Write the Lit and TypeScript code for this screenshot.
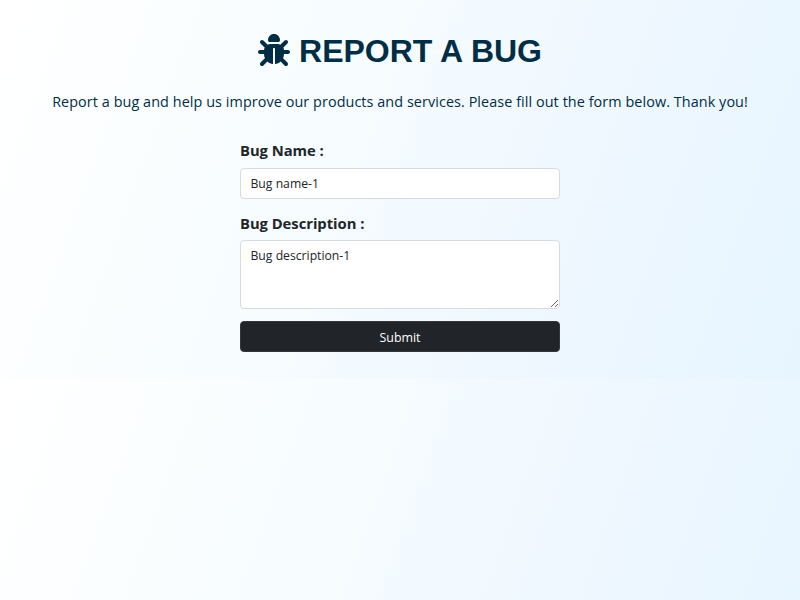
import { LitElement, html, css } from "lit";
import { customElement } from "lit/decorators.js";

@customElement("app-root")
export class AppRoot extends LitElement {
  static styles = css`
    :host {
      display: block;
      box-sizing: border-box;
      height: 600px;
      padding-top: 32px;
      overflow: hidden;
      font-family: "Open Sans", "Noto Sans", sans-serif;
      color: #212529;
      background: linear-gradient(109.6deg, #ffffff 0%, #f8fdff 33%, #f0f8ff 66%, #e6f5ff 100%) 0 0 / 100% 379px repeat-y;
    }
    * { box-sizing: border-box; }
    .title {
      margin: 0;
      height: 38px;
      display: flex;
      justify-content: center;
      align-items: center;
      gap: 9px;
      font: 700 32px/38px "Liberation Sans", Arial, sans-serif;
      color: #012e44;
      white-space: nowrap;
    }
    .icon { width: 32px; height: 32px; fill: currentColor; margin-top: -2px; }
    .intro {
      margin: 20px 0 0;
      text-align: center;
      font-size: 14.4px;
      font-weight: 400;
      letter-spacing: 0.07px;
      line-height: 24px;
      color: #012e44;
      white-space: nowrap;
    }
    .form { width: 320px; margin: 25px auto 0; display: flex; flex-direction: column; }
    .label { font-size: 14.8px; font-weight: 700; line-height: 22px; margin-bottom: 7px; letter-spacing: -0.04px; }
    .field {
      display: block;
      width: 100%;
      margin: 0;
      padding: 4px 9.5px;
      border: 1px solid #d5dbe1;
      border-radius: 4px;
      background: #fff;
      color: #212529;
      font: 400 12.2px/20px "Open Sans", "Noto Sans", sans-serif;
      outline: none;
    }
    .line { height: 31px; margin-bottom: 13px; }
    .line + .label { margin-bottom: 6px; }
    .area { height: 69px; padding-top: 5px; margin-bottom: 12px; resize: vertical; overflow: auto; }
    .submit {
      height: 31px;
      padding: 2px 0 0;
      border: 1px solid #33373b;
      border-radius: 4px;
      background: #212529;
      color: #fff;
      font: 400 12.4px/27px "Open Sans", "Noto Sans", sans-serif;
    }
  `;

  render() {
    return html`
      <h1 class="title">
        <svg class="icon" viewBox="0 0 512 512" aria-hidden="true">
          <path d="M256 0c53 0 96 43 96 96v3.6c0 15.7-12.7 28.4-28.4 28.4H188.4c-15.7 0-28.4-12.7-28.4-28.4V96c0-53 43-96 96-96zM41.4 105.4c12.5-12.5 32.8-12.5 45.3 0l64 64c.7 .7 1.3 1.4 1.9 2.1c14.2-7.3 30.4-11.4 47.5-11.4H312c17.1 0 33.2 4.1 47.5 11.4c.6-.7 1.2-1.4 1.9-2.1l64-64c12.5-12.5 32.8-12.5 45.3 0s12.5 32.8 0 45.3l-64 64c-.7 .7-1.4 1.3-2.1 1.9c6.2 12 10.1 25.3 11.1 39.5H480c17.7 0 32 14.3 32 32s-14.3 32-32 32H416c0 24.6-5.5 47.8-15.4 68.6c2.2 1.3 4.2 2.9 6 4.8l64 64c12.5 12.5 12.5 32.8 0 45.3s-32.8 12.5-45.3 0l-63.1-63.1c-24.5 21.8-55.8 36.2-90.3 39.6V240c0-8.8-7.2-16-16-16s-16 7.2-16 16V479.2c-34.5-3.4-65.8-17.8-90.3-39.6L86.6 502.6c-12.5 12.5-32.8 12.5-45.3 0s-12.5-32.8 0-45.3l64-64c1.9-1.9 3.9-3.4 6-4.8C101.5 367.8 96 344.6 96 320H32c-17.7 0-32-14.3-32-32s14.3-32 32-32H96.3c1.1-14.1 5-27.5 11.1-39.5c-.7-.6-1.4-1.2-2.1-1.9l-64-64c-12.5-12.5-12.5-32.8 0-45.3z"></path>
        </svg>
        <span>REPORT A BUG</span>
      </h1>
      <p class="intro">Report a bug and help us improve our products and services. Please fill out the form below. Thank you!</p>
      <form class="form" @submit=${(e: Event) => e.preventDefault()}>
        <label class="label" for="name">Bug Name :</label>
        <input class="field line" id="name" type="text" .value=${"Bug name-1"} />
        <label class="label" for="description">Bug Description :</label>
        <textarea class="field area" id="description" spellcheck="false" .value=${"Bug description-1"}></textarea>
        <button class="submit" type="submit">Submit</button>
      </form>
    `;
  }
}
